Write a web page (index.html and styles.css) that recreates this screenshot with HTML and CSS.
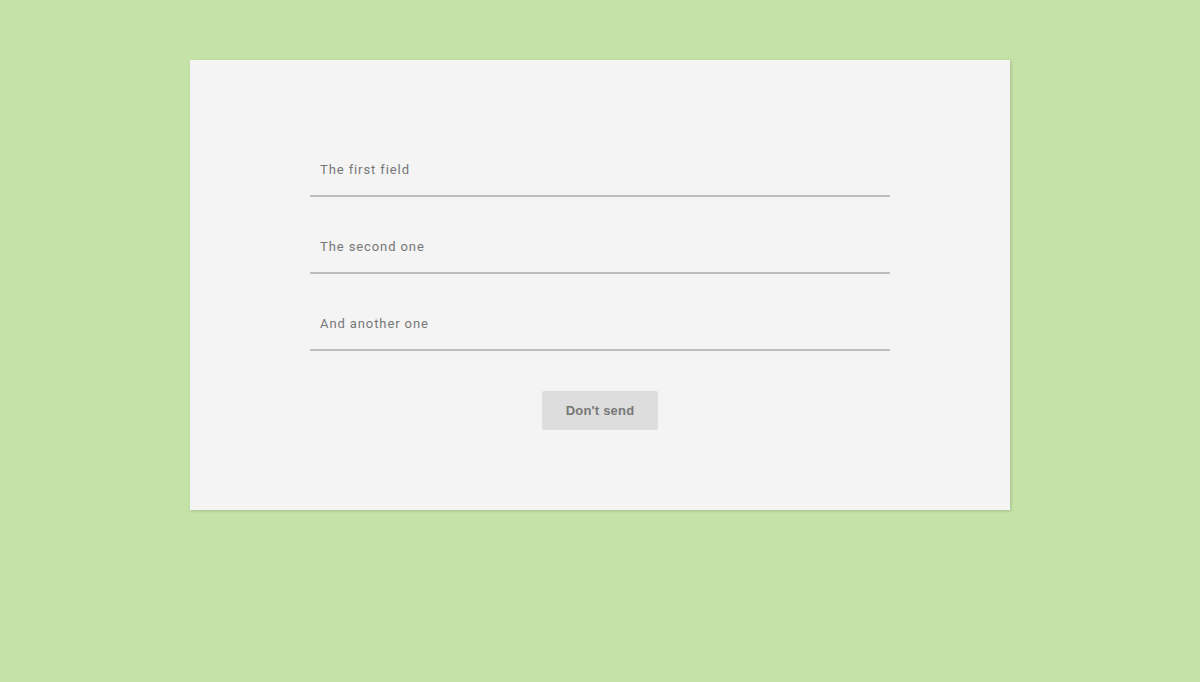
FILE: index.html
```html
<!DOCTYPE html>
<html>
<head>
<meta charset="utf-8">
<link rel="stylesheet" href="styles.css">
</head>
<body>
<div class="card">
  <form class="form">
    <div class="field"><label class="label">The first field</label></div>
    <div class="field"><label class="label">The second one</label></div>
    <div class="field"><label class="label">And another one</label></div>
    <div class="actions"><button type="button" class="btn">Don't send</button></div>
  </form>
</div>
</body>
</html>
```
FILE: styles.css
```css
html, body {
  margin: 0;
  padding: 0;
}
body {
  background: #c6e3a7;
  width: 1200px;
  height: 682px;
  padding-top: 60px;
  box-sizing: border-box;
}
.card {
  width: 820px;
  height: 450px;
  margin: 0 0 0 190px;
  background: #f4f4f4;
  box-shadow: 1px 1px 3px rgba(0,0,0,0.18);
  box-sizing: border-box;
  padding-top: 98px;
}
.form {
  width: 580px;
  margin: 0 auto;
  display: flex;
  flex-direction: column;
  gap: 38px;
}
.field {
  height: 39px;
  box-sizing: border-box;
  border-bottom: 2px solid #bdbdbd;
  padding-left: 10px;
  padding-top: 1px;
}
.label {
  display: block;
  font-family: Roboto, "Liberation Sans", sans-serif;
  font-size: 13px;
  line-height: 22px;
  letter-spacing: 0.9px;
  color: #777;
}
.actions {
  display: flex;
  justify-content: center;
  margin-top: 2px;
}
.btn {
  width: 116px;
  height: 39px;
  border: none;
  border-radius: 2px;
  background: #dddddd;
  color: #777;
  font-family: "Liberation Sans", Arial, sans-serif;
  font-weight: bold;
  font-size: 13px;
  letter-spacing: 0.2px;
  padding: 0;
}
```
